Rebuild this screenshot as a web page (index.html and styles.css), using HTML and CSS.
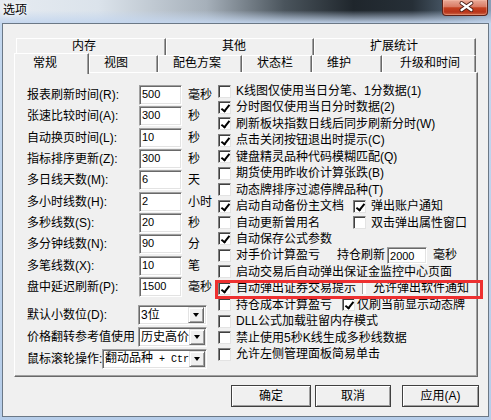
FILE: index.html
```html
<!DOCTYPE html>
<html lang="zh-CN">
<head>
<meta charset="utf-8">
<title>选项</title>
<link rel="stylesheet" href="styles.css">
</head>
<body>
<div class="window">
  <div class="titlebar">
    <span class="title">选项</span>
    <div class="close">
      <svg viewBox="0 0 46 16" width="46" height="16">
        <path d="M20 3 L30 10 M30 3 L20 10" stroke="#4a1e16" stroke-width="4.2" stroke-linecap="round"/>
        <path d="M20 3 L30 10 M30 3 L20 10" stroke="#ffffff" stroke-width="2.4" stroke-linecap="round"/>
      </svg>
    </div>
  </div>
  <div class="client">
    <div class="tabs">
      <div class="tabrow back">
        <div class="tab t-mem">内存</div>
        <div class="tab t-oth">其他</div>
        <div class="tab t-ext">扩展统计</div>
      </div>
      <div class="tabrow front">
        <div class="tab sel t-gen">常规</div>
        <div class="tab t-view">视图</div>
        <div class="tab t-color">配色方案</div>
        <div class="tab t-status">状态栏</div>
        <div class="tab t-maint">维护</div>
        <div class="tab t-upd">升级和时间</div>
      </div>
    </div>
    <div class="panel">
      <div class="leftcol">
        <div class="lrow"><span class="lbl">报表刷新时间(R):</span><span class="edit">500</span><span class="unit">毫秒</span></div>
        <div class="lrow"><span class="lbl">张速比较时间(A):</span><span class="edit">300</span><span class="unit">秒</span></div>
        <div class="lrow"><span class="lbl">自动换页时间(L):</span><span class="edit">10</span><span class="unit">秒</span></div>
        <div class="lrow"><span class="lbl">指标排序更新(Z):</span><span class="edit">300</span><span class="unit">秒</span></div>
        <div class="lrow"><span class="lbl">多日线天数(M):</span><span class="edit">6</span><span class="unit">天</span></div>
        <div class="lrow"><span class="lbl">多小时线数(H):</span><span class="edit">2</span><span class="unit">小时</span></div>
        <div class="lrow"><span class="lbl">多秒线数(S):</span><span class="edit">20</span><span class="unit">秒</span></div>
        <div class="lrow"><span class="lbl">多分钟线数(N):</span><span class="edit">90</span><span class="unit">分</span></div>
        <div class="lrow"><span class="lbl">多笔线数(X):</span><span class="edit">10</span><span class="unit">笔</span></div>
        <div class="lrow"><span class="lbl">盘中延迟刷新(P):</span><span class="edit">1500</span><span class="unit">毫秒</span></div>
        <div class="drows">
          <div class="drow"><span class="lbl dl1">默认小数位(D):</span><div class="combo c-short"><span class="ctext">3位</span><span class="cbtn"><i class="tri"></i></span></div></div>
          <div class="drow"><span class="lbl dl2">价格翻转参考值使用</span><div class="combo c-short"><span class="ctext">历史高价</span><span class="cbtn"><i class="tri"></i></span></div></div>
          <div class="drow"><span class="lbl dl3">鼠标滚轮操作:</span><div class="combo c-long"><span class="ctext">翻动品种<span class="mono"> + Ctr</span></span><span class="cbtn"><i class="tri"></i></span></div></div>
        </div>
      </div>
      <div class="rightcol">
        <div class="crow"><span class="cb"></span><span>K线图仅使用当日分笔、1分数据(1)</span></div>
        <div class="crow"><span class="cb on"></span><span>分时图仅使用当日分时数据(2)</span></div>
        <div class="crow"><span class="cb on"></span><span>刷新板块指数日线后同步刷新分时(W)</span></div>
        <div class="crow"><span class="cb on"></span><span>点击关闭按钮退出时提示(C)</span></div>
        <div class="crow"><span class="cb on"></span><span>键盘精灵品种代码模糊匹配(Q)</span></div>
        <div class="crow"><span class="cb"></span><span>期货使用昨收价计算张跌(B)</span></div>
        <div class="crow"><span class="cb"></span><span>动态牌排序过滤停牌品种(T)</span></div>
        <div class="crow"><span class="c1 w135"><span class="cb on"></span><span>启动自动备份主文档</span></span><span class="cb on"></span><span>弹出账户通知</span></div>
        <div class="crow"><span class="c1 w135"><span class="cb"></span><span>自动更新曾用名</span></span><span class="cb"></span><span>双击弹出属性窗口</span></div>
        <div class="crow"><span class="cb on"></span><span>自动保存公式参数</span></div>
        <div class="crow"><span class="c1 w119"><span class="cb"></span><span>对手价计算盈亏</span></span><span class="hold">持仓刷新</span><span class="edit small">2000</span><span class="unit">毫秒</span></div>
        <div class="crow"><span class="cb"></span><span>启动交易后自动弹出保证金监控中心页面</span></div>
        <div class="crow"><span class="c1 w144"><span class="cb on"></span><span>自动弹出证券交易提示</span></span><span class="sliver"></span><span>允许弹出软件通知</span></div>
        <div class="crow"><span class="c1 w124"><span class="cb"></span><span>持仓成本计算盈亏</span></span><span class="cb on tight"></span><span>仅刷当前显示动态牌</span></div>
        <div class="crow"><span class="cb"></span><span>DLL公式加载驻留内存模式</span></div>
        <div class="crow"><span class="cb"></span><span>禁止使用5秒K线生成多秒线数据</span></div>
        <div class="crow"><span class="cb"></span><span>允许左侧管理面板简易单击</span></div>
      </div>
      <div class="highlight"></div>
    </div>
    <div class="btns">
      <button class="btn b-ok">确定</button>
      <button class="btn b-cancel">取消</button>
      <button class="btn b-apply">应用(A)</button>
    </div>
  </div>
</div>
</body>
</html>
```

FILE: styles.css
```css
* { box-sizing: border-box; margin: 0; padding: 0; }
html, body { width: 491px; height: 420px; overflow: hidden; }
body {
  font-family: "Liberation Sans", "Noto Sans CJK SC", sans-serif;
  font-size: 12px;
  color: #000;
  background: #bcd3ec;
}
.window {
  width: 491px;
  height: 420px;
  display: flex;
  flex-direction: column;
  background: linear-gradient(to bottom, #c4d8ef, #b6cde9);
}
.titlebar {
  height: 23px;
  display: flex;
  align-items: flex-start;
  padding-left: 3px;
  background:
    linear-gradient(to bottom, rgba(190,210,234,0) 0%, rgba(190,210,234,0) 45%, rgba(196,214,238,0.95) 100%),
    linear-gradient(to right, #e6ebf1 0%, #dbe3eb 20%, #a6b0ba 42%, #4a545c 58%, #1f262c 72%, #262f37 84%, #56687a 94%, #8aa0b8 100%);
}
.title {
  padding-top: 3px;
  line-height: 14px;
  font-size: 12px;
  text-shadow: 0 0 4px #fff, 0 0 6px #fff;
}
.close {
  margin-left: auto;
  margin-right: 3px;
  width: 46px;
  height: 16px;
  border: 1px solid #5e2218;
  border-top: none;
  border-radius: 0 0 4px 4px;
  background: linear-gradient(to bottom, #e9aa98 0%, #d97b64 45%, #c4401f 52%, #b8341a 80%, #cf6a48 100%);
  box-shadow: inset 0 0 0 1px rgba(255,200,180,0.35);
  display: flex;
}
.close svg { display: block; margin-left: -1px; }
.client {
  flex: 1;
  margin: 0 2px 3px 2px;
  border: 1px solid #6b7886;
  background: #f0f0f0;
  padding: 14px 0 0 11px;
}
.tabs { width: 464px; height: 34px; }
.tabrow { display: flex; height: 17px; }
.tabrow.back { padding-left: 2px; }
.tab {
  height: 17px;
  border-top: 1px solid #fff;
  border-left: 1px solid #fff;
  border-right: 1px solid #696969;
  box-shadow: inset -1px 0 #a0a0a0;
  background: #f0f0f0;
  line-height: 15px;
  white-space: nowrap;
}
.back .tab { padding-left: 55px; }
.front .tab { padding-left: 14px; }
.t-mem { width: 150px; }
.t-oth { width: 148px; }
.t-ext { width: 162px; }
.t-gen { width: 75px; }
.t-view { width: 69px; }
.t-color { width: 84px; }
.t-status { width: 70px; }
.t-maint { width: 70px; }
.front .t-upd { width: 94px; padding-left: 17px; }
.tab.sel {
  position: relative;
  z-index: 2;
  margin-top: -2px;
  height: 21px;
  line-height: 18px;
  padding-left: 18px;
}
.panel {
  position: relative;
  width: 464px;
  height: 305px;
  border-top: 1px solid #fff;
  border-left: 1px solid #fff;
  border-right: 1px solid #696969;
  border-bottom: 1px solid #696969;
  box-shadow: inset -1px -1px #a0a0a0;
  display: flex;
}
.leftcol {
  width: 203px;
  padding: 12px 0 0 12px;
  display: flex;
  flex-direction: column;
  gap: 1.33px;
}
.lrow { height: 20px; display: flex; align-items: center; white-space: nowrap; }
.lbl { width: 112px; line-height: 16px; }
.edit {
  width: 43px;
  height: 20px;
  background: #fff;
  border: 1px solid;
  border-color: #a0a0a0 #fff #fff #a0a0a0;
  box-shadow: inset 1px 1px #696969, inset -1px -1px #e3e3e3;
  padding-left: 2px;
  font-size: 11px;
  line-height: 15px;
  padding-top: 1px;
}
.edit.small { width: 40px; height: 17px; line-height: 14px; margin-left: 2px; }
.unit { margin-left: 6px; line-height: 16px; }
.drows { margin-top: 6.7px; display: flex; flex-direction: column; gap: 2px; }
.drow { height: 20px; display: flex; align-items: center; white-space: nowrap; }
.dl1 { width: 111px; }
.dl2 { width: 111px; }
.dl3 { width: 75px; }
.combo {
  height: 20px;
  display: flex;
  align-items: center;
  background: #fff;
  border: 1px solid;
  border-color: #a0a0a0 #fff #fff #a0a0a0;
  box-shadow: inset 1px 1px #696969, inset -1px -1px #e3e3e3;
  padding: 2px 2px 2px 2px;
}
.c-short { width: 69px; }
.c-long { width: 105px; }
.ctext { flex: 1; white-space: nowrap; line-height: 16px; }
.mono { font-family: "Liberation Mono", monospace; font-size: 10px; }
.cbtn {
  width: 16px;
  height: 16px;
  flex: none;
  background: #f0f0f0;
  border: 1px solid;
  border-color: #e3e3e3 #696969 #696969 #e3e3e3;
  box-shadow: inset 1px 1px #fff, inset -1px -1px #a0a0a0;
  display: flex;
  align-items: center;
  justify-content: center;
}
.tri {
  width: 0; height: 0;
  border-left: 3.5px solid transparent;
  border-right: 3.5px solid transparent;
  border-top: 4px solid #000;
  margin-top: 1px;
}
.rightcol {
  padding-top: 9.8px;
  display: flex;
  flex-direction: column;
}
.crow {
  height: 16.44px;
  display: flex;
  align-items: center;
  white-space: nowrap;
  line-height: 16px;
}
.c1 { display: flex; align-items: center; }
.w135 { width: 135px; }
.w119 { width: 119px; }
.w144 { width: 144px; }
.w124 { width: 124px; }
.cb {
  position: relative;
  width: 13px;
  height: 13px;
  flex: none;
  margin-right: 5px;
  background: #fff;
  border: 1px solid;
  border-color: #808080 #e3e3e3 #e3e3e3 #808080;
  box-shadow: inset 1px 1px #404040;
}
.cb.tight { margin-right: 2px; }
.cb.on::after {
  content: "";
  position: absolute;
  left: 4px;
  top: 1px;
  width: 3px;
  height: 7px;
  border: solid #000;
  border-width: 0 2px 2px 0;
  transform: rotate(38deg);
}
.hold { line-height: 16px; }
.sliver {
  width: 4px;
  height: 12px;
  margin-right: 7px;
  background: #fff;
  border-left: 1px solid #a0a0a0;
}
.highlight {
  position: absolute;
  left: 200px;
  top: 207px;
  width: 268px;
  height: 19px;
  border: 3px solid #ee3030;
}
.btns {
  display: flex;
  margin-top: 8px;
  padding-left: 217px;
}
.btn {
  height: 22px;
  font: inherit;
  font-size: 12px;
  color: #000;
  background: #f0f0f0;
  border: 1px solid #404040;
  box-shadow: inset 1px 1px #fff, inset -1px -1px #a0a0a0;
  line-height: 18px;
}
.b-ok { width: 80px; }
.b-cancel { width: 76px; margin-left: 4px; }
.b-apply { width: 77px; margin-left: 11px; }
```
